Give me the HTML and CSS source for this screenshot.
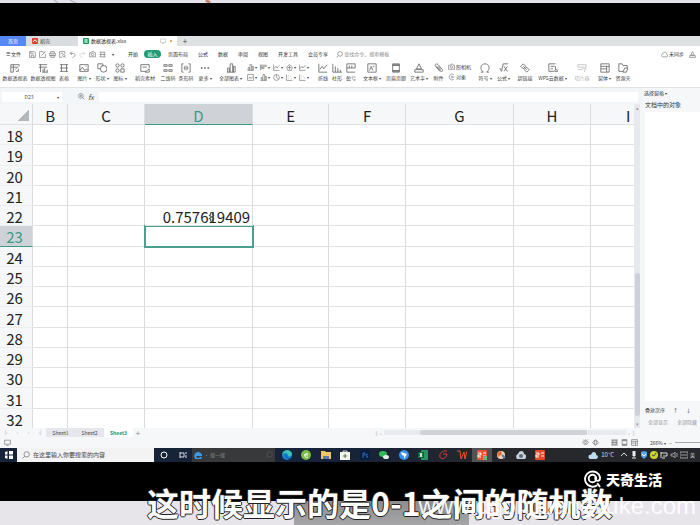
FILE: index.html
```
<!DOCTYPE html>
<html lang="zh-CN">
<head>
<meta charset="utf-8">
<meta name="viewport" content="width=device-width, initial-scale=1.0">
<title>数据透视表.xlsx</title>
<link rel="stylesheet" href="styles.css">
</head>
<body>
<svg class="defs" aria-hidden="true">
  <symbol id="pivot" viewBox="0 0 12 12"><path d="M1 2h10M1 5h9M4 2v9M1 2v9h3M7 10h3V7M6 8l2-2M11 2v2"/></symbol>
  <symbol id="pchart" viewBox="0 0 12 12"><path d="M1 2h10M1 5h10M3 2v9M6 11V7M8 11V6M11 11V8M5 11h7"/></symbol>
  <symbol id="table" viewBox="0 0 12 12"><path d="M1 2h10M1 6h10M1 10h10M3 2v8M9 2v8"/></symbol>
  <symbol id="picture" viewBox="0 0 12 12"><path d="M1 2h10v8H1zM1 9l3-4 3 4 2-2 2 2M8 4h1"/></symbol>
  <symbol id="shapes" viewBox="0 0 12 12"><path d="M1 1h6v3M1 1v6h3"/><circle cx="8" cy="7" r="4"/></symbol>
  <symbol id="four" viewBox="0 0 12 12"><circle cx="3" cy="3" r="2"/><circle cx="9" cy="3" r="2"/><circle cx="3" cy="9" r="2"/><path d="M7 7h4v4H7z"/></symbol>
  <symbol id="material" viewBox="0 0 12 12"><path d="M7 10H1V2h10v4M3 5h5M6 11l5-4v4z"/></symbol>
  <symbol id="qr" viewBox="0 0 12 12"><path d="M1 2h4v2H1zM7 2h4v2H7zM1 8h4v2H1zM7 8h4v2H7z"/></symbol>
  <symbol id="barcode" viewBox="0 0 12 12"><path d="M3 1H1v10h2M9 1h2v10H9M4 4v4M6 3v6M8 4v4"/></symbol>
  <symbol id="dots" viewBox="0 0 12 12"><path d="M1 6h2M5 6h2M9 6h2" stroke-width="2"/></symbol>
  <symbol id="bars" viewBox="0 0 12 12"><path d="M2 11V6h2v5M5 11V1h3v10M9 11V4h2v7M1 11h10"/></symbol>
  <symbol id="hbars" viewBox="0 0 12 12"><path d="M1 1v10M1 2h10v2H1M1 6h6v2H1"/></symbol>
  <symbol id="line" viewBox="0 0 12 12"><path d="M1 1v10h10M2 8l3-4 2 3 4-5"/></symbol>
  <symbol id="framed" viewBox="0 0 12 12"><path d="M1 1h10v10H1zM3 8l2-3 2 3 3-4"/></symbol>
  <symbol id="radar" viewBox="0 0 12 12"><path d="M6 1l5 4-2 6H3L1 5zM6 3v7M3 6h6"/></symbol>
  <symbol id="pie" viewBox="0 0 12 12"><circle cx="6" cy="6" r="5"/><path d="M6 1v5l4 3"/></symbol>
  <symbol id="scatter" viewBox="0 0 12 12"><path d="M1 1v10h10M4 7h1M7 4h1M9 7h1M4 3h1"/></symbol>
  <symbol id="column" viewBox="0 0 12 12"><path d="M1 1v10h11M4 11V4M7 11V6M10 11V8"/></symbol>
  <symbol id="winloss" viewBox="0 0 12 12"><path d="M1 11V1h10v5H1M4 3v3M7 3v3M1 11h10"/></symbol>
  <symbol id="textbox" viewBox="0 0 12 12"><path d="M1 1h10v10H1zM3 9l2-5 2 5M7 4h2"/></symbol>
  <symbol id="page" viewBox="0 0 12 12"><path d="M2 1h8v10H2zM2 3h8M2 9h8M2 2h8M2 10h8"/></symbol>
  <symbol id="art" viewBox="0 0 12 12"><path d="M3 7l3-6 3 6M1 8h10v3H1zM3 7h6"/></symbol>
  <symbol id="clip" viewBox="0 0 12 12"><path d="M3 4l5 6c2 1 3-1 2-2L5 2C3 0 0 2 2 4l5 6M5 4l3 4"/></symbol>
  <symbol id="camera" viewBox="0 0 12 12"><path d="M1 3h3l1-2h3l1 2h2v7H1z"/><circle cx="6" cy="6" r="2"/></symbol>
  <symbol id="object" viewBox="0 0 12 12"><path d="M10 2a5 5 0 1 0 0 8M5 6h6M7 4v4"/></symbol>
  <symbol id="omega" viewBox="0 0 12 12"><path d="M1 11h3c-5-4-3-10 2-10s7 6 2 10h3"/></symbol>
  <symbol id="root" viewBox="0 0 12 12"><path d="M1 6l2 4 2-9h6M6 4l4 6M10 4l-4 6"/></symbol>
  <symbol id="link" viewBox="0 0 12 12"><path d="M4 1l3 3-3 3-3-3zM8 5l3 3-3 3-3-3zM4 4l4 4"/></symbol>
  <symbol id="cloudform" viewBox="0 0 12 12"><path d="M9 1H1v9h6M3 4h5M3 7h3M9 4v4M8 10c0-3 4-3 4 0z"/></symbol>
  <symbol id="slicer" viewBox="0 0 12 12"><path d="M1 2h10v3H1zM1 8h5M6 7h5l-2 2v2"/></symbol>
  <symbol id="form" viewBox="0 0 12 12"><path d="M1 1h10v10H1zM1 4h10M1 7h7M8 4v7"/></symbol>
  <symbol id="folder" viewBox="0 0 12 12"><path d="M6 10H1V1h4l1 2h5v3M6 11l2-5h4l-2 5z"/></symbol>
  <symbol id="save" viewBox="0 0 12 12"><path d="M1 1h8l2 2v8H1zM3 1v3h5M4 11V7h4v4"/></symbol>
  <symbol id="export" viewBox="0 0 12 12"><path d="M1 1h6M1 1v10h10V5M4 8l6-6M7 2h4"/></symbol>
  <symbol id="print" viewBox="0 0 12 12"><path d="M3 4V1h6v3M1 4h10v4H1zM3 7h6v4H3z"/></symbol>
  <symbol id="preview" viewBox="0 0 12 12"><path d="M5 11H1V1h9v4M3 4h4"/><circle cx="8" cy="8" r="2"/><path d="M9 9l2 2"/></symbol>
  <symbol id="undo" viewBox="0 0 12 12"><path d="M5 1L2 4l3 3M2 4h5c5 0 4 7-1 7"/></symbol>
  <symbol id="redo" viewBox="0 0 12 12"><path d="M7 1l3 3-3 3M10 4H5C0 4 1 11 6 11"/></symbol>
  <symbol id="search" viewBox="0 0 12 12"><circle cx="7" cy="5" r="4"/><path d="M4 8l-3 3"/></symbol>
  <symbol id="zoomin" viewBox="0 0 12 12"><circle cx="5" cy="5" r="4"/><path d="M8 8l3 3M3 5h4M5 3v4"/></symbol>
  <symbol id="cloud" viewBox="0 0 12 12"><path d="M4 10C0 10 0 6 3 5c1-4 7-4 7 1 2 1 2 4-1 4z"/></symbol>
  <symbol id="screen" viewBox="0 0 12 12"><path d="M1 2h10v7H1zM4 11h4"/></symbol>
  <symbol id="eye" viewBox="0 0 12 12"><path d="M1 6c3-5 7-5 10 0-3 5-7 5-10 0M6 1V0M3 2L2 1M9 2l1-1"/><circle cx="6" cy="6" r="2"/></symbol>
  <symbol id="cross" viewBox="0 0 12 12"><path d="M1 6l3-3v6zM11 6L8 3v6zM4 3l2-2 2 2zM4 9l2 2 2-2z"/></symbol>
</svg>

<div class="backdrop-top">
  <svg width="240" height="3"><path d="M54 0l4 3M70 0l6 3" stroke="#aaa6b4"/><path d="M206 0l4 3" stroke="#c98468" stroke-width="3"/></svg>
</div>
<div class="letterbox-top"></div>

<nav class="tabs">
  <a class="tab home" href="#">首页</a>
  <a class="tab docer" href="#"><svg class="i6" viewBox="0 0 6 6"><rect width="6" height="6" rx="1" fill="#e33c30"/><path d="M1 4q2-4 4 0" stroke="#fff"/></svg>稻壳</a>
  <a class="tab file" href="#"><svg class="i6" viewBox="0 0 6 6"><rect width="6" height="6" rx="1" fill="#179c68"/><path d="M1 2h4M1 4h4M3 1v4" stroke="#c6eddb"/></svg>数据透视表.xlsx
    <svg class="i6 state" viewBox="0 0 12 12"><use href="#screen"/></svg><i class="unsaved"></i></a>
  <button class="add">+</button>
</nav>

<header class="menu">
  <button class="file-menu">☰ 文件</button>
  <div class="quick">
    <button aria-label="保存"><svg><use href="#save"/></svg></button>
    <button aria-label="输出"><svg><use href="#export"/></svg></button>
    <button aria-label="打印"><svg><use href="#print"/></svg></button>
    <button aria-label="预览"><svg><use href="#preview"/></svg></button>
    <button aria-label="撤销"><svg><use href="#undo"/></svg></button>
    <button aria-label="恢复" class="off"><svg><use href="#redo"/></svg></button>
    <button aria-label="照相机"><svg><use href="#camera"/></svg></button>
    <button aria-label="表格"><svg><use href="#table"/></svg></button>
    <button aria-label="自定义" class="drop"></button>
  </div>
  <nav class="menu-items">
    <a href="#">开始</a><a href="#" class="on">插入</a><a href="#">页面布局</a><a href="#">公式</a><a href="#">数据</a><a href="#">审阅</a><a href="#">视图</a><a href="#">开发工具</a><a href="#">会员专享</a>
  </nav>
  <label class="find"><svg><use href="#search"/></svg><input placeholder="查找命令、搜索模板" aria-label="查找命令"></label>
  <button class="sync"><svg><use href="#cloud"/></svg>未同步</button>
  <button class="share" aria-label="协作"><svg><use href="#art"/></svg></button>
</header>

<div class="ribbon">
  <button><svg><use href="#pivot"/></svg>数据透视表</button>
  <button><svg><use href="#pchart"/></svg>数据透视图</button>
  <button><svg><use href="#table"/></svg>表格</button>
  <button><svg><use href="#picture"/></svg><span class="drop">图片</span></button>
  <button><svg><use href="#shapes"/></svg><span class="drop">形状</span></button>
  <button><svg><use href="#four"/></svg><span class="drop">图标</span></button>
  <button><svg><use href="#material"/></svg>稻壳素材</button>
  <button><svg><use href="#qr"/></svg>二维码</button>
  <button><svg><use href="#barcode"/></svg>条形码</button>
  <button><svg><use href="#dots"/></svg><span class="drop">更多</span></button>
  <button><svg><use href="#bars"/></svg><span class="drop">全部图表</span></button>
  <div class="charts">
    <button class="drop" aria-label="柱形图"><svg><use href="#bars"/></svg></button>
    <button class="drop" aria-label="条形图"><svg><use href="#hbars"/></svg></button>
    <button class="drop" aria-label="折线图"><svg><use href="#line"/></svg></button>
    <button class="drop" aria-label="雷达图"><svg><use href="#radar"/></svg></button>
    <button class="drop" aria-label="组合图"><svg><use href="#line"/></svg></button>
    <button class="drop" aria-label="面积图"><svg><use href="#framed"/></svg></button>
    <button class="drop" aria-label="直方图"><svg><use href="#bars"/></svg></button>
    <button class="drop" aria-label="饼图"><svg><use href="#pie"/></svg></button>
    <button class="drop" aria-label="散点图"><svg><use href="#scatter"/></svg></button>
    <button class="drop" aria-label="股价图"><svg><use href="#scatter"/></svg></button>
  </div>
  <button><svg><use href="#line"/></svg>折线</button>
  <button><svg><use href="#column"/></svg>柱形</button>
  <button><svg><use href="#winloss"/></svg>盈亏</button>
  <button><svg><use href="#textbox"/></svg><span class="drop">文本框</span></button>
  <button><svg><use href="#page"/></svg>页眉页脚</button>
  <button><svg><use href="#art"/></svg><span class="drop">艺术字</span></button>
  <button><svg><use href="#clip"/></svg>附件</button>
  <div class="stack">
    <button><svg><use href="#camera"/></svg>照相机</button>
    <button><svg><use href="#object"/></svg>对象</button>
  </div>
  <button><svg><use href="#omega"/></svg><span class="drop">符号</span></button>
  <button><svg><use href="#root"/></svg><span class="drop">公式</span></button>
  <button><svg><use href="#link"/></svg>超链接</button>
  <button><svg><use href="#cloudform"/></svg><span class="drop">WPS云数据</span></button>
  <button class="off"><svg><use href="#slicer"/></svg>切片器</button>
  <button><svg><use href="#form"/></svg><span class="drop">窗体</span></button>
  <button><svg><use href="#folder"/></svg>资源夹</button>
</div>

<div class="work">
  <div class="book">
    <div class="formula">
      <label class="name-box drop"><input value="D23" aria-label="名称框"></label>
      <svg><use href="#zoomin"/></svg><i class="fx">fx</i>
      <input class="formula-input" aria-label="编辑栏">
    </div>
    <div class="sheet">
      <div class="cells">
        <table>
          <colgroup><col class="c-head"><col class="c-b"><col class="c-m"><col class="c-l"><col class="c-m"><col class="c-m"><col class="c-l"><col class="c-m"><col class="c-m"></colgroup>
          <thead><tr><th class="corner"></th><th>B</th><th>C</th><th class="sel">D</th><th>E</th><th>F</th><th>G</th><th>H</th><th>I</th></tr></thead>
          <tbody>
            <tr><th>18</th><td></td><td></td><td></td><td></td><td></td><td></td><td></td><td></td></tr>
            <tr><th>19</th><td></td><td></td><td></td><td></td><td></td><td></td><td></td><td></td></tr>
            <tr><th>20</th><td></td><td></td><td></td><td></td><td></td><td></td><td></td><td></td></tr>
            <tr><th>21</th><td></td><td></td><td></td><td></td><td></td><td></td><td></td><td></td></tr>
            <tr><th>22</th><td></td><td></td><td class="num">0.757619409<svg class="cursor" viewBox="0 0 8 12"><path d="M3 4V1h2v3h2L4 6 1 4zM1 8l3-2 3 2H5v3H3V8z"/></svg></td><td></td><td></td><td></td><td></td><td></td></tr>
            <tr><th class="sel">23</th><td></td><td></td><td class="active"></td><td></td><td></td><td></td><td></td><td></td></tr>
            <tr><th>24</th><td></td><td></td><td></td><td></td><td></td><td></td><td></td><td></td></tr>
            <tr><th>25</th><td></td><td></td><td></td><td></td><td></td><td></td><td></td><td></td></tr>
            <tr><th>26</th><td></td><td></td><td></td><td></td><td></td><td></td><td></td><td></td></tr>
            <tr><th>27</th><td></td><td></td><td></td><td></td><td></td><td></td><td></td><td></td></tr>
            <tr><th>28</th><td></td><td></td><td></td><td></td><td></td><td></td><td></td><td></td></tr>
            <tr><th>29</th><td></td><td></td><td></td><td></td><td></td><td></td><td></td><td></td></tr>
            <tr><th>30</th><td></td><td></td><td></td><td></td><td></td><td></td><td></td><td></td></tr>
            <tr><th>31</th><td></td><td></td><td></td><td></td><td></td><td></td><td></td><td></td></tr>
            <tr><th>32</th><td></td><td></td><td></td><td></td><td></td><td></td><td></td><td></td></tr>
          </tbody>
        </table>
      </div>
      <div class="vscroll"><span>▴</span><div class="vthumb"></div><span>▾</span></div>
    </div>
    <div class="sheet-tabs">
      <div class="pager"><span>|‹</span><span>‹</span><span>›</span><span>›|</span></div>
      <button>Sheet1</button><button>Sheet2</button><button class="on">Sheet3</button><button class="plus">+</button>
      <div class="hscroll"><span>‖ ‹</span><div class="htrack"><div class="hthumb"></div></div><span>› ‖</span></div>
    </div>
  </div>
  <aside class="pane">
    <button class="drop">选择窗格</button>
    <h2>文档中的对象</h2>
    <div class="objects"></div>
    <div class="order">叠放次序<span>↑</span><span>↓</span></div>
    <div class="show"><button>全部显示</button><button>全部隐藏</button></div>
  </aside>
</div>

<footer class="status">
  <svg><use href="#screen"/></svg>
  <div class="status-right">
    <svg><use href="#eye"/></svg>
    <svg class="wide"><use href="#cross"/></svg>
    <svg class="view"><use href="#table"/></svg>
    <svg><use href="#page"/></svg>
    <svg><use href="#form"/></svg>
    <button class="drop zoom">266%</button><span>−</span>
    <input type="range" aria-label="缩放">
  </div>
</footer>

<div class="taskbar">
  <button class="start" aria-label="开始"><svg viewBox="0 0 8 8"><path d="M0 1l3-1v4H0zM4 0h4v4H4zM0 4h3v4L0 7zM4 4h4v4H4z" fill="#fff"/><path d="M0 4h8M3 0v8" stroke="#172338"/></svg></button>
  <label class="win-search"><svg><use href="#search"/></svg><input placeholder="在这里输入你要搜索的内容" aria-label="搜索"></label>
  <button class="cortana" aria-label="Cortana"><svg viewBox="0 0 8 8"><circle cx="4" cy="4" r="3" fill="none" stroke="#fff"/></svg></button>
  <button class="cortana" aria-label="任务视图"><svg viewBox="0 0 8 8"><path d="M1 1v6M1 2h4v4H1M7 1v2M7 4v3" fill="none" stroke="#dde"/></svg></button>
  <label class="ie"><svg viewBox="0 0 8 8"><path d="M7 6A3 3 0 1 1 7 4H2" fill="none" stroke="#3a9be8" stroke-width="2"/></svg><input placeholder="• 搜一搜" aria-label="搜索网页"><svg class="dim"><use href="#search"/></svg></label>
  <div class="apps">
    <button aria-label="Edge"><svg viewBox="0 0 10 10"><circle cx="5" cy="5" r="5" fill="#1684cf"/><path d="M0 5C1-1 9-1 10 4c0 3-4 3-4 1-1-3-5-2-6 0" fill="#3cc5b3"/><path d="M4 5c0 4 4 4 5 3" fill="none" stroke="#0c4d98"/></svg></button>
    <button aria-label="浏览器"><svg viewBox="0 0 10 10"><circle cx="5" cy="5" r="5" fill="#79bd43"/><path d="M7 4a2 2 0 1 0 0 3M3 5h4" fill="none" stroke="#fff"/></svg></button>
    <button aria-label="文件"><svg viewBox="0 0 10 10"><path d="M0 1h4l1 1h5v7H0z" fill="#efc565"/><path d="M2 9V6h6v3" fill="#587b9a"/></svg></button>
    <button aria-label="商店"><svg viewBox="0 0 10 10"><path d="M0 2h10v8H0z" fill="#f3f2e8"/><path d="M3 2V1h4v1" fill="none" stroke="#ddd"/><path d="M3 6h4M5 4v4" stroke="#577665"/></svg></button>
    <button aria-label="Photoshop"><svg viewBox="0 0 10 10"><rect width="10" height="10" rx="2" fill="#061e42"/><path d="M3 8V3h2v2H3M8 4L6 5l2 2H6" fill="none" stroke="#2c69ac"/></svg></button>
    <button aria-label="微信"><svg viewBox="0 0 10 10"><ellipse cx="4" cy="4" rx="4" ry="3" fill="#32ba59"/><ellipse cx="7" cy="7" rx="3" ry="2" fill="#e7eee9"/></svg></button>
    <button aria-label="钉钉"><svg viewBox="0 0 10 10"><circle cx="5" cy="5" r="5" fill="#3a91eb"/><path d="M2 2l6 2-3 5V6L3 5z" fill="#fff"/></svg></button>
    <button aria-label="Excel"><svg viewBox="0 0 10 10"><path d="M3 0h7v10H3z" fill="#259661"/><path d="M0 2h6v6H0z" fill="#09673a"/><path d="M2 3l2 4M4 3L2 7" stroke="#fff"/></svg></button>
    <button aria-label="阅读器"><svg viewBox="0 0 10 10"><path d="M9 1C4 0 1 4 2 7s6 2 7-3H5" fill="none" stroke="#db3f2c"/></svg></button>
    <button aria-label="WPS"><svg viewBox="0 0 10 10"><path d="M0 1h3l1 8 3-7 1 7 2-8" fill="none" stroke="#ed5030"/></svg></button>
    <button aria-label="表格" class="on"><svg viewBox="0 0 10 10"><rect width="10" height="10" rx="1" fill="#ee4f2c"/><path d="M1 3h3v2H1v2h3M6 3h3M6 6h3" stroke="#fff" fill="none"/><path d="M6 6h4v4H6z" fill="#68b978"/></svg></button>
    <button aria-label="画图"><svg viewBox="0 0 10 10"><circle cx="5" cy="5" r="4" fill="#edd0b1"/><path d="M1 3l4-2 1 3-4 3z" fill="#df6b35"/><path d="M6 5l3 3" stroke="#5278a5" stroke-width="2"/></svg></button>
    <button aria-label="网盘"><svg viewBox="0 0 10 10"><path d="M1 9C-1 6 1 4 2 4c1-4 6-4 6 0 2 0 3 3 1 5z" fill="#c9d2da"/><circle cx="5" cy="6" r="2" fill="#5e6c77"/></svg></button>
    <button aria-label="录屏"><svg viewBox="0 0 10 10"><rect width="10" height="10" rx="1" fill="#e84728"/><path d="M1 3h3v2H1v2h3M6 3h3M6 6h3" stroke="#fff" fill="none"/></svg></button>
  </div>
  <div class="tray">
    <svg class="weather" viewBox="0 0 10 8"><path d="M2 8C-1 6 1 3 3 4c1-5 6-3 5 0 3 0 2 4 0 4z" fill="#bfdcf1"/></svg>
    <span class="temp">10°C</span>
    <svg viewBox="0 0 8 8"><path d="M1 5l3-3 3 3" fill="none" stroke="#ddd"/></svg>
    <svg viewBox="0 0 8 8"><path d="M3 0h2v5H3zM2 7h4" fill="#eee" stroke="#eee"/></svg>
    <svg viewBox="0 0 8 8"><path d="M1 1l3-1 3 1v4L4 8 1 5z" fill="#57a7e8"/><path d="M2 3l2 2 2-2" stroke="#fff" fill="none"/></svg>
    <svg viewBox="0 0 8 8"><circle cx="4" cy="4" r="4" fill="#cfd52b"/><path d="M2 4l2 1 2-3" stroke="#345" fill="none"/></svg>
    <svg viewBox="0 0 8 8"><path d="M1 1v6M1 2h6v3H3M2 7h3" fill="none" stroke="#ddd"/></svg>
    <svg viewBox="0 0 8 8"><path d="M1 3h2l2-2v6L3 5H1zM7 2v4" fill="none" stroke="#999"/></svg>
    <svg viewBox="0 0 8 8"><path d="M0 1h8v6H0zM1 4h6" fill="none" stroke="#999"/></svg>
    <span>英</span>
  </div>
</div>

<div class="letterbox-bottom">
  <div class="brand"><svg viewBox="0 0 20 20"><path d="M15 17A8 8 0 1 1 18 9c0 5-5 4-5 1V8M15 15l3 4" fill="none" stroke="#fff" stroke-width="2"/><circle cx="10" cy="10" r="4" fill="none" stroke="#fff" stroke-width="2"/></svg>天奇生活</div>
</div>
<div class="backdrop-bottom"><div class="desk"></div></div>
<div class="caption">这时候显示的是0-1之间的随机数</div>
<div class="watermark">www.dgongjiangyuke.com</div>
</body>
</html>
```
FILE: styles.css
```
* {
  box-sizing: border-box;
}

body {
  margin: 0;
  min-height: 100vh;
  display: flex;
  flex-direction: column;
  position: relative;
  overflow: hidden;
  background: #fff;
  color: #444;
  font: 5px/8px "Noto Sans CJK SC", sans-serif;
}

button, input {
  font: inherit;
  color: inherit;
  border: 0;
  margin: 0;
  padding: 0;
  background: none;
  min-width: 0;
  outline: 0;
}

a {
  color: inherit;
  text-decoration: none;
}

button, a, span {
  white-space: nowrap;
}

svg {
  width: 8px;
  height: 8px;
  flex: none;
  fill: none;
  stroke: #666;
}

use {
  stroke: inherit;
}

svg[viewBox] {
  stroke: none;
}

.defs {
  position: absolute;
  width: 0;
  height: 0;
}

.drop::after {
  content: "▾";
  font-size: 4px;
  margin-left: 1px;
}

.off {
  opacity: 0.4;
}

.backdrop-top {
  height: 3px;
  background: #e4e2ea;
}

.backdrop-top svg {
  display: block;
  width: 240px;
  height: 3px;
}

.letterbox-top {
  height: 33px;
  background: #000;
}

/* window tabs */
.tabs {
  height: 10px;
  display: flex;
  background: #dfe2e3;
}

.tab {
  display: flex;
  align-items: center;
  gap: 2px;
}

.home {
  width: 26px;
  justify-content: center;
  background: #5687f5;
  color: #fff;
}

.docer {
  width: 52px;
  padding-left: 6px;
  background: #dadddf;
}

.file {
  width: 99px;
  padding-left: 5px;
  background: #fff;
  color: #222;
}

.i6 {
  width: 6px;
  height: 6px;
}

.state {
  margin-left: auto;
  stroke: #aaa !important;
}

.unsaved {
  width: 2px;
  height: 2px;
  margin: 0 5px 0 2px;
  background: #e0b050;
}

.add {
  width: 16px;
  font-size: 8px;
}

/* menu row */
.menu {
  height: 16px;
  display: flex;
  align-items: center;
  color: #333;
}

.file-menu {
  width: 27px;
}

.quick {
  width: 96px;
  display: grid;
  grid-template-columns: repeat(9, 10px);
  align-items: center;
}

.quick button {
  height: 8px;
  display: grid;
  place-items: center;
}

.menu svg, .formula svg, .status svg {
  width: 7px;
  height: 7px;
}

.menu-items {
  display: flex;
  align-items: center;
  gap: 10px;
  padding-left: 5px;
}

.menu-items .on {
  margin: 0 -3px 0 -4px;
  width: 17px;
  text-align: center;
  border-radius: 4px;
  background: #209b75;
  color: #fff;
}

.find {
  display: flex;
  align-items: center;
  padding-left: 8px;
  gap: 1px;
}

.find input {
  width: 60px;
}

::placeholder {
  color: #888;
  opacity: 1;
}

.sync {
  margin-left: auto;
  display: flex;
  align-items: center;
  gap: 1px;
}

.share {
  width: 16px;
  height: 8px;
  display: grid;
  place-items: center;
}

/* ribbon */
.ribbon {
  height: 26px;
  display: grid;
  grid-template-columns: 30px 26px 16px 24px 12px 24px 26px 20px 16px 22px 29px 71px 14px 14px 14px 28px 20px 26px 13px 28px 24px 13px 30px 25px 34px 11px 26px;
  border-bottom: 1px solid #e0e2e4;
}

.ribbon > button {
  display: flex;
  flex-direction: column;
  align-items: center;
  gap: 1px;
}

.ribbon > button > svg {
  width: 10px;
  height: 10px;
  margin-top: 1px;
}

.charts {
  display: grid;
  grid-template-columns: repeat(5, 1fr);
  grid-auto-rows: 10px;
  padding-right: 6px;
}

.charts button {
  display: flex;
  align-items: center;
  justify-content: center;
}

.charts svg {
  width: 7px;
  height: 7px;
}

.stack {
  display: flex;
  flex-direction: column;
  gap: 2px;
  padding: 1px 0 0 3px;
}

.stack button {
  display: flex;
  gap: 1px;
}

.stack svg {
  width: 7px;
}

/* workbook */
.work {
  flex: 1;
  display: flex;
  min-height: 0;
}

.book {
  flex: 1;
  min-width: 0;
  display: flex;
  flex-direction: column;
}

.formula {
  height: 16px;
  display: flex;
  align-items: center;
  gap: 3px;
  padding: 3px 5px 2px 2px;
  background: #f3f6f8;
}

.name-box {
  width: 60px;
  height: 10px;
  display: flex;
  align-items: center;
  background: #fff;
}

.name-box input {
  width: 54px;
  text-align: center;
}

.formula > svg {
  margin-left: 13px;
}

.fx {
  width: 8px;
  font-size: 7px;
}

.formula-input {
  flex: 1;
  height: 10px;
  background: #fff;
}

.sheet {
  flex: 1;
  min-height: 0;
  display: flex;
}

.cells {
  flex: 1;
  min-width: 0;
  overflow: hidden;
}

table {
  width: 667px;
  height: calc(100% + 1px);
  table-layout: fixed;
  border-collapse: separate;
  border-spacing: 0;
  font-size: 15px;
  line-height: 17px;
  color: #222;
}

.c-head { width: 33px; }
.c-b { width: 35px; }
.c-m { width: 76px; }
.c-l { width: 108px; }

th, td {
  padding: 2px 0 0;
  border-right: 1px solid #dadcdf;
  border-bottom: 1px solid #dfe1e4;
}

th {
  font-weight: 400;
  background: #f5f7f9;
}

thead th {
  height: 21px;
}

tbody th {
  padding-right: 3px;
  border-bottom-color: #eceef1;
}

thead th.sel, tbody th.sel {
  background: #cfd3d8;
  color: #3a9c86;
  border-bottom-color: #3a9c86;
}

.corner {
  background: linear-gradient(135deg, transparent 50%, #b5b8bb 50%) 18px 6px / 11px 11px no-repeat #f5f7f9;
}

.num {
  position: relative;
  text-align: right;
  padding-right: 2px;
}

/* mouse pointer over the cell */
.cursor {
  position: absolute;
  top: 5px;
  right: 37px;
  width: 7px;
  height: 12px;
  fill: #fff;
  stroke: #333 !important;
}

.active {
  outline: 2px solid #49a091;
  outline-offset: -1px;
}

.vscroll {
  width: 9px;
  display: flex;
  flex-direction: column;
  justify-content: space-between;
  align-items: center;
  background: #e7e9ef;
  border-right: 3px solid #f5f7f9;
  color: #999;
}

.vthumb {
  width: 5px;
  height: 44%;
  margin-top: auto;
  margin-bottom: 4px;
  border-radius: 2px;
  background: #cdd1d8;
}

.sheet-tabs {
  height: 9px;
  display: flex;
  background: #f5f7f9;
}

.pager {
  width: 46px;
  display: flex;
  justify-content: space-around;
  color: #aaa;
}

.sheet-tabs button {
  width: 29px;
  background: #e6e6ed;
}

.sheet-tabs .on {
  background: #fff;
  color: #20946d;
  font-weight: 700;
}

.sheet-tabs .plus {
  width: 10px;
  background: none;
  color: #888;
  font-size: 8px;
  font-weight: 400;
}

.hscroll {
  width: 262px;
  margin-left: auto;
  margin-right: 7px;
  display: flex;
  align-items: center;
  gap: 2px;
  color: #888;
}

.htrack {
  flex: 1;
  height: 5px;
  padding-left: 36px;
  background: #e7eaee;
}

.hthumb {
  width: 81%;
  height: 5px;
  border-radius: 2px;
  background: #cfd3d8;
}

.pane {
  width: 57px;
  display: flex;
  flex-direction: column;
  align-items: flex-start;
  padding: 1px 0 11px 1px;
  background: #f5f7f9;
  color: #333;
}

.pane h2 {
  margin: 4px 0 3px 1px;
  font: 6px/8px "Noto Sans CJK SC", sans-serif;
}

.objects {
  flex: 1;
  align-self: stretch;
  margin-left: 1px;
  background: #fff;
}

.order {
  padding: 5px 0 4px 1px;
}

.order span {
  margin-left: 8px;
}

.show {
  display: flex;
  gap: 9px;
  padding-left: 4px;
  color: #999;
}

/* status bar */
.status {
  height: 11px;
  display: flex;
  align-items: center;
  justify-content: space-between;
  padding-left: 4px;
  overflow: hidden;
  background: #f5f7f9;
}

.status-right {
  width: 118px;
  display: flex;
  align-items: center;
  gap: 3px;
}

.status .wide {
  margin-right: 9px;
}

.status .view {
  background: #d4d8dc;
}

.zoom {
  margin-left: 9px;
}

.status input {
  flex: 1;
  height: 1px;
  appearance: none;
  background: #aaa;
}

.status input::-webkit-slider-thumb {
  appearance: none;
}

/* windows taskbar */
.taskbar {
  height: 14px;
  display: flex;
  align-items: center;
  background: linear-gradient(90deg, #172338 50%, #26282c 72%);
  color: #ddd;
}

.taskbar button {
  height: 14px;
  display: grid;
  place-items: center;
}

.start {
  width: 17px;
}

.win-search {
  width: 137px;
  height: 14px;
  display: flex;
  align-items: center;
  gap: 3px;
  padding-left: 5px;
  background: #f3f3f4;
}

.win-search input {
  flex: 1;
  font-size: 6px;
}

.win-search ::placeholder {
  color: #444;
}

.cortana {
  width: 19px;
}

.ie {
  width: 83px;
  height: 14px;
  display: flex;
  align-items: center;
  gap: 2px;
  padding: 0 2px;
  background: #38393b;
}

.ie input {
  flex: 1;
}

.dim {
  opacity: 0.8;
}

.apps {
  display: grid;
  grid-template-columns: repeat(14, 1fr);
  width: 273px;
  margin-left: 2px;
}

.apps svg {
  width: 10px;
  height: 10px;
}

.apps .on {
  background: #505254;
}

.tray {
  display: flex;
  align-items: center;
  gap: 2px;
  margin-left: auto;
  padding-right: 5px;
}

.tray .weather {
  width: 10px;
}

.temp {
  font-size: 6px;
  margin: 0 4px 0 1px;
}

/* video frame */
.letterbox-bottom {
  height: 39px;
  display: flex;
  justify-content: flex-end;
  background: #000;
}

.brand {
  height: 19px;
  margin: 7px 38px 0 0;
  display: flex;
  align-items: center;
  gap: 4px;
  color: #fff;
  font-size: 14px;
  font-weight: 900;
}

.brand svg {
  width: 19px;
  height: 19px;
}

.backdrop-bottom {
  height: 24px;
  background: #e7e4ea;
}

.desk {
  width: 25%;
  height: 100%;
  margin-left: 42%;
  background: linear-gradient(#8d8d8f, #a6a6a8);
}

.watermark {
  position: absolute;
  right: 4px;
  bottom: 5px;
  color: rgba(255, 255, 255, 0.9);
  font: 24px/28px "Liberation Sans", Arial, sans-serif;
}

.caption {
  position: absolute;
  left: 147px;
  bottom: 3px;
  color: #fff;
  font-size: 32px;
  line-height: 40px;
  font-weight: 700;
  white-space: nowrap;
  text-shadow: 1px 0 #222, -1px 0 #222, 0 1px #222, 0 -1px #222;
}
```
